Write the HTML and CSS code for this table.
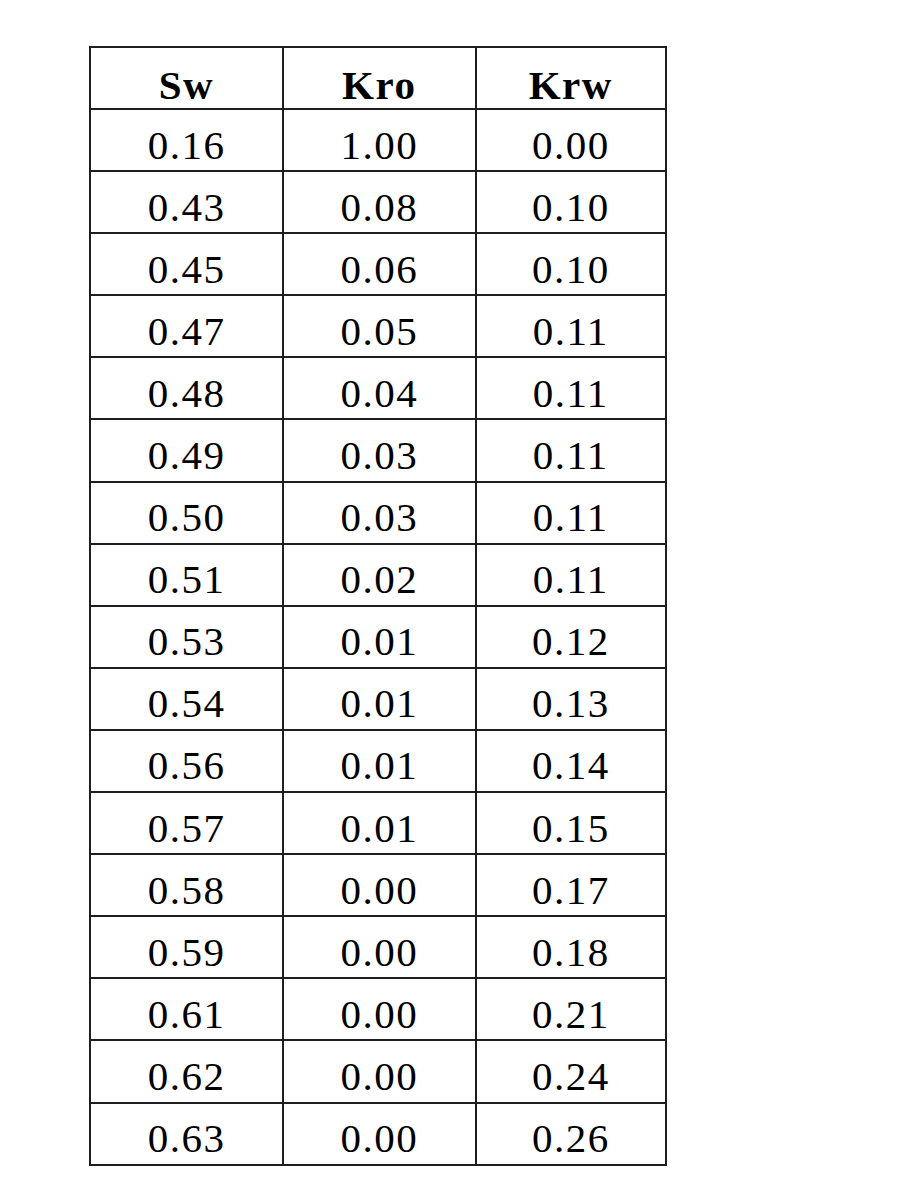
FILE: index.html
```html
<!DOCTYPE html>
<html>
<head>
<meta charset="utf-8">
<link rel="stylesheet" href="styles.css">
</head>
<body>
<table class="perm">
<colgroup>
<col class="c1"><col class="c2"><col class="c3">
</colgroup>
<thead>
<tr><th>Sw</th><th>Kro</th><th>Krw</th></tr>
</thead>
<tbody>
<tr><td>0.16</td><td>1.00</td><td>0.00</td></tr>
<tr><td>0.43</td><td>0.08</td><td>0.10</td></tr>
<tr><td>0.45</td><td>0.06</td><td>0.10</td></tr>
<tr><td>0.47</td><td>0.05</td><td>0.11</td></tr>
<tr><td>0.48</td><td>0.04</td><td>0.11</td></tr>
<tr><td>0.49</td><td>0.03</td><td>0.11</td></tr>
<tr><td>0.50</td><td>0.03</td><td>0.11</td></tr>
<tr><td>0.51</td><td>0.02</td><td>0.11</td></tr>
<tr><td>0.53</td><td>0.01</td><td>0.12</td></tr>
<tr><td>0.54</td><td>0.01</td><td>0.13</td></tr>
<tr><td>0.56</td><td>0.01</td><td>0.14</td></tr>
<tr><td>0.57</td><td>0.01</td><td>0.15</td></tr>
<tr><td>0.58</td><td>0.00</td><td>0.17</td></tr>
<tr><td>0.59</td><td>0.00</td><td>0.18</td></tr>
<tr><td>0.61</td><td>0.00</td><td>0.21</td></tr>
<tr><td>0.62</td><td>0.00</td><td>0.24</td></tr>
<tr><td>0.63</td><td>0.00</td><td>0.26</td></tr>
</tbody>
</table>
</body>
</html>
```
FILE: styles.css
```css
html, body {
  margin: 0;
  padding: 0;
  background: #ffffff;
}
body {
  padding: 46px 0 0 89px;
  font-family: "Liberation Serif", "Times New Roman", serif;
  color: #000;
}
.perm {
  border-collapse: collapse;
  table-layout: fixed;
  width: 576px;
}
.c1 { width: 193px; }
.c2 { width: 192.5px; }
.c3 { width: 190.5px; }
.perm th, .perm td {
  border: 2px solid #1e1e1e;
  box-sizing: border-box;
  text-align: center;
  vertical-align: middle;
  font-size: 41px;
  line-height: 41px;
  letter-spacing: 1.5px;
}
.perm th {
  font-weight: bold;
  height: 62px;
  padding: 14px 0 0 0;
}
.perm td {
  height: 62.1px;
  padding: 10px 0 0 0;
}
```
